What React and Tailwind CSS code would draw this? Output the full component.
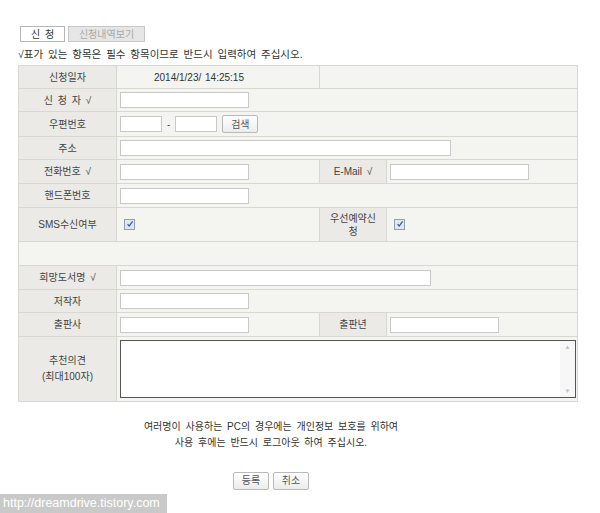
import React from 'react';

const labelCls = 'border border-[#d8d8d3] bg-[#ebeae6] text-center text-[#444] leading-[13px]';
const valueCls = 'border border-[#d8d8d3] bg-[#f4f4f1] pl-[3px] text-left';

function TextInput({ w = 'w-[129px]' }) {
  return <input type="text" className={`block h-[16px] ${w} border border-[#c9c9c9] bg-white outline-none`} />;
}

function Check() {
  return (
    <span className="ml-[4px] inline-flex h-[11px] w-[11px] items-center justify-center border border-[#8f9fb9] bg-[#e2e6ee]">
      <svg viewBox="0 0 10 10" className="h-[8px] w-[8px]">
        <path d="M2 5.2 L4 7.6 L8.2 1.8" stroke="#3a52a8" strokeWidth="1.6" fill="none" />
      </svg>
    </span>
  );
}

function SmallButton({ children }) {
  return (
    <button className="h-[18px] w-[36px] rounded-[2px] border border-[#b9b9b9] bg-gradient-to-b from-white to-[#ececec] text-[10px] text-[#555]">
      {children}
    </button>
  );
}

export default function App() {
  return (
    <div className="relative h-[513px] w-[600px] overflow-hidden bg-white font-['Liberation_Sans','Noto_Sans_CJK_KR',sans-serif] text-[10px] text-[#333] [word-spacing:2px]">
      <div className="pl-[18px] pt-[26px]">
        {/* tabs */}
        <div className="ml-[2px] flex gap-[3px]">
          <div className="flex h-[16px] w-[45px] items-center justify-center border border-[#b5b5b5] bg-white text-[#333]">
            신 청
          </div>
          <div className="flex h-[16px] w-[77px] items-center justify-center border border-[#c8c8c8] bg-[#e6e6e6] text-[#a8a8a8] [word-spacing:0px]">
            신청내역보기
          </div>
        </div>

        <p className="mt-[4px] h-[19px] text-[10.5px] leading-[16px]">
          √표가 있는 항목은 필수 항목이므로 반드시 입력하여 주십시오.
        </p>

        <table className="w-[560px] table-fixed border-collapse border border-[#d8d8d3]">
          <colgroup>
            <col className="w-[98px]" />
            <col className="w-[203px]" />
            <col className="w-[67px]" />
            <col />
          </colgroup>
          <tbody>
            <tr className="h-[23px]">
              <td className={labelCls}>신청일자</td>
              <td className={`${valueCls} pl-[37px] text-[#333] [word-spacing:1px]`}>2014/1/23/ 14:25:15</td>
              <td className={valueCls} colSpan={2}></td>
            </tr>
            <tr className="h-[23px]">
              <td className={labelCls}>신 청 자 √</td>
              <td className={valueCls} colSpan={3}>
                <TextInput />
              </td>
            </tr>
            <tr className="h-[25px]">
              <td className={labelCls}>우편번호</td>
              <td className={valueCls} colSpan={3}>
                <div className="flex items-center">
                  <TextInput w="w-[42px]" />
                  <span className="mx-[5px] text-[#555]">-</span>
                  <TextInput w="w-[42px]" />
                  <span className="ml-[5px]">
                    <SmallButton>검색</SmallButton>
                  </span>
                </div>
              </td>
            </tr>
            <tr className="h-[23px]">
              <td className={labelCls}>주소</td>
              <td className={valueCls} colSpan={3}>
                <TextInput w="w-[331px]" />
              </td>
            </tr>
            <tr className="h-[24px]">
              <td className={labelCls}>전화번호 √</td>
              <td className={valueCls}>
                <TextInput />
              </td>
              <td className={labelCls}>E-Mail √</td>
              <td className={valueCls}>
                <TextInput w="w-[139px]" />
              </td>
            </tr>
            <tr className="h-[24px]">
              <td className={labelCls}>핸드폰번호</td>
              <td className={valueCls} colSpan={3}>
                <TextInput />
              </td>
            </tr>
            <tr className="h-[34px]">
              <td className={labelCls}>SMS수신여부</td>
              <td className={valueCls}>
                <Check />
              </td>
              <td className={labelCls}>
                우선예약신
                <br />청
              </td>
              <td className={valueCls}>
                <Check />
              </td>
            </tr>
            <tr className="h-[24px]">
              <td className={valueCls} colSpan={4}></td>
            </tr>
            <tr className="h-[24px]">
              <td className={labelCls}>희망도서명 √</td>
              <td className={valueCls} colSpan={3}>
                <TextInput w="w-[311px]" />
              </td>
            </tr>
            <tr className="h-[23px]">
              <td className={labelCls}>저작자</td>
              <td className={valueCls} colSpan={3}>
                <TextInput />
              </td>
            </tr>
            <tr className="h-[24px]">
              <td className={labelCls}>출판사</td>
              <td className={valueCls}>
                <TextInput />
              </td>
              <td className={labelCls}>출판년</td>
              <td className={valueCls}>
                <TextInput w="w-[109px]" />
              </td>
            </tr>
            <tr className="h-[65px]">
              <td className={`${labelCls} leading-[16px]`}>
                추천의견
                <br />
                (최대100자)
              </td>
              <td className={valueCls} colSpan={3}>
                <div className="flex h-[58px] w-[456px] border border-[#555] bg-white">
                  <textarea className="h-full flex-1 resize-none bg-white outline-none" />
                  <div className="flex w-[15px] flex-col items-center justify-between bg-[#f7f7f7] py-[3px] text-[6px] leading-[6px] text-[#c0c0c0]">
                    <span>▲</span>
                    <span>▼</span>
                  </div>
                </div>
              </td>
            </tr>
          </tbody>
        </table>
      </div>

      <div className="w-[542px] pt-[17px] text-center leading-[16px]">
        <p>여러명이 사용하는 PC의 경우에는 개인정보 보호를 위하여</p>
        <p>사용 후에는 반드시 로그아웃 하여 주십시오.</p>
        <div className="mt-[21px] flex justify-center gap-[4px]">
          <SmallButton>등록</SmallButton>
          <SmallButton>취소</SmallButton>
        </div>
      </div>

      {/* blog watermark over the capture */}
      <div className="absolute bottom-0 left-0 flex h-[19px] w-[167px] items-center bg-[#c9c9c9] pl-[3px] text-[12.5px] text-white [word-spacing:0px]">
        http://dreamdrive.tistory.com
      </div>
    </div>
  );
}
